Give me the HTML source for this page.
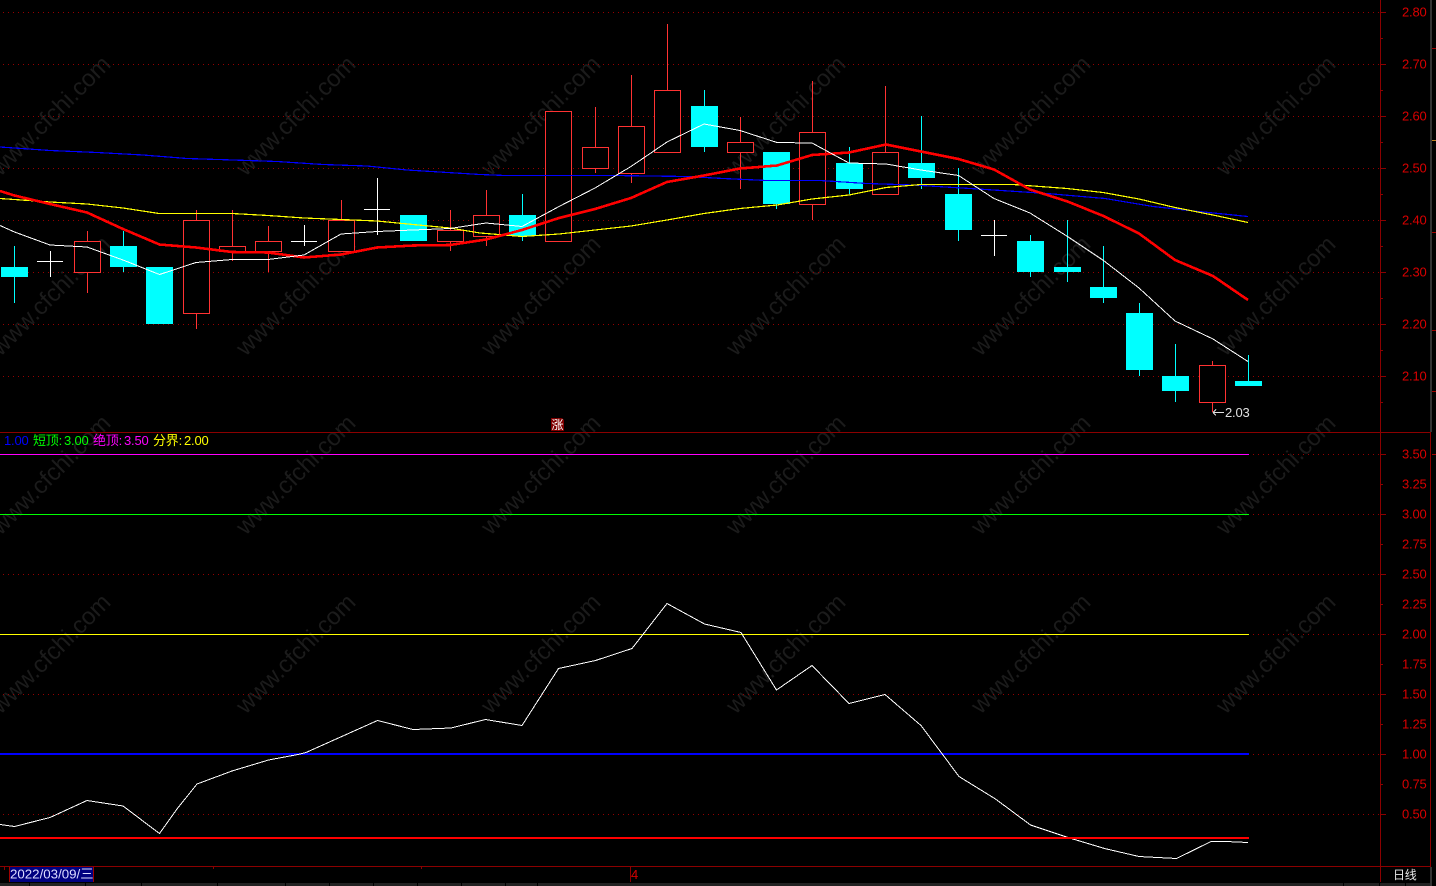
<!DOCTYPE html>
<html>
<head>
<meta charset="utf-8">
<style>
html,body{margin:0;padding:0;background:#000;width:1436px;height:886px;overflow:hidden}
svg{display:block}
text{font-family:"Liberation Sans","Noto Sans CJK SC",sans-serif;font-size:13px;letter-spacing:-.2px}
.ax text{fill:#d80000}
.wm text{font-size:24px;fill:#1b1b1b;text-anchor:middle;dominant-baseline:central;letter-spacing:-.1px}
</style>
</head>
<body>
<svg width="1436" height="886" viewBox="0 0 1436 886" xmlns="http://www.w3.org/2000/svg">
<rect width="1436" height="886" fill="#000"/>
<g class="wm">
<text transform="translate(51,116) rotate(-45)">www.cfchi.com</text>
<text transform="translate(296,116) rotate(-45)">www.cfchi.com</text>
<text transform="translate(541,116) rotate(-45)">www.cfchi.com</text>
<text transform="translate(786,116) rotate(-45)">www.cfchi.com</text>
<text transform="translate(1031,116) rotate(-45)">www.cfchi.com</text>
<text transform="translate(1276,116) rotate(-45)">www.cfchi.com</text>
<text transform="translate(51,296) rotate(-45)">www.cfchi.com</text>
<text transform="translate(296,296) rotate(-45)">www.cfchi.com</text>
<text transform="translate(541,296) rotate(-45)">www.cfchi.com</text>
<text transform="translate(786,296) rotate(-45)">www.cfchi.com</text>
<text transform="translate(1031,296) rotate(-45)">www.cfchi.com</text>
<text transform="translate(1276,296) rotate(-45)">www.cfchi.com</text>
<text transform="translate(51,475) rotate(-45)">www.cfchi.com</text>
<text transform="translate(296,475) rotate(-45)">www.cfchi.com</text>
<text transform="translate(541,475) rotate(-45)">www.cfchi.com</text>
<text transform="translate(786,475) rotate(-45)">www.cfchi.com</text>
<text transform="translate(1031,475) rotate(-45)">www.cfchi.com</text>
<text transform="translate(1276,475) rotate(-45)">www.cfchi.com</text>
<text transform="translate(51,654) rotate(-45)">www.cfchi.com</text>
<text transform="translate(296,654) rotate(-45)">www.cfchi.com</text>
<text transform="translate(541,654) rotate(-45)">www.cfchi.com</text>
<text transform="translate(786,654) rotate(-45)">www.cfchi.com</text>
<text transform="translate(1031,654) rotate(-45)">www.cfchi.com</text>
<text transform="translate(1276,654) rotate(-45)">www.cfchi.com</text>
</g>

<!-- dotted grid -->
<g stroke="#960000" stroke-width="1" stroke-dasharray="1 4" shape-rendering="crispEdges" fill="none">
<path d="M3 12.5H1380M3 64.5H1380M3 116.5H1380M3 168.5H1380M3 220.5H1380M3 272.5H1380M3 324.5H1380M3 376.5H1380"/>
<path d="M3 454.5H1380M3 514.5H1380M3 574.5H1380M3 634.5H1380M3 694.5H1380M3 754.5H1380M3 814.5H1380"/>
</g>

<!-- frame and axis -->
<g stroke="#8b0000" stroke-width="1" shape-rendering="crispEdges" fill="none">
<path d="M1380.5 0V882"/>
<path d="M0 432.5H1431"/>
<path d="M0 866.5H1431"/>
<path d="M1430.5 432V866"/>
<path d="M1380 12.5h6M1380 64.5h6M1380 116.5h6M1380 168.5h6M1380 220.5h6M1380 272.5h6M1380 324.5h6M1380 376.5h6"/>
<path d="M1380 38.5h3M1380 90.5h3M1380 142.5h3M1380 194.5h3M1380 246.5h3M1380 298.5h3M1380 350.5h3M1380 402.5h3"/>
<path d="M1380 454.5h6M1380 514.5h6M1380 574.5h6M1380 634.5h6M1380 694.5h6M1380 754.5h6M1380 814.5h6"/>
<path d="M1380 484.5h3M1380 544.5h3M1380 604.5h3M1380 664.5h3M1380 724.5h3M1380 784.5h3"/>
<path d="M4.5 866v4M213.5 866v3M421.5 866v3M630.5 866v16"/>
</g>

<!-- scrollbar and bottom strip -->
<rect x="1430" y="0" width="2" height="432" fill="#333"/>
<rect x="1430" y="867" width="2" height="19" fill="#333"/>
<rect x="0" y="883" width="1430" height="3" fill="#222"/>
<g fill="#000">
<rect x="29" y="883" width="1" height="3"/><rect x="85" y="883" width="1" height="3"/><rect x="141" y="883" width="1" height="3"/><rect x="217" y="883" width="1" height="3"/><rect x="285" y="883" width="1" height="3"/><rect x="329" y="883" width="1" height="3"/><rect x="373" y="883" width="1" height="3"/><rect x="417" y="883" width="1" height="3"/><rect x="461" y="883" width="1" height="3"/><rect x="505" y="883" width="1" height="3"/><rect x="537" y="883" width="1" height="3"/><rect x="1343" y="883" width="1" height="3"/><rect x="1379" y="883" width="1" height="3"/><rect x="1405" y="883" width="1" height="3"/>
</g>
<rect x="1432" y="48" width="4" height="1" fill="#a00000"/>
<rect x="1432" y="140" width="4" height="1" fill="#c08020"/>
<rect x="1432" y="232" width="4" height="1" fill="#a00000"/>
<rect x="1432" y="330" width="4" height="1" fill="#a00000"/>
<rect x="1432" y="391" width="4" height="1" fill="#a00000"/>
<rect x="1432" y="454" width="4" height="1" fill="#a00000"/>

<!-- candles -->
<g shape-rendering="crispEdges" fill="none">
<!-- wicks cyan -->
<path stroke="#0ff" d="M14.5 246V303M123.5 231V272M522.5 194V241M704.5 90V152M776.5 152V209M849.5 147V194M921.5 116V189M958.5 168V241M1030.5 235V277M1067.5 220V282M1103.5 246V303M1139.5 303V376M1175.5 344V402M1248.5 355V381"/>
<!-- wicks red -->
<path stroke="#ff3232" d="M87.5 231V293M196.5 210V329M232.5 210V261M268.5 226V272M341.5 200V220M450.5 210V251M486.5 190V246M595.5 107V173M631.5 75V183M667.5 24V90M740.5 117V189M812.5 81V220M885.5 86V152M1212.5 361V412"/>
<!-- crosses -->
<path stroke="#fff" d="M50.5 251V277M37 261.5H63M304.5 225V246M291 241.5H317M377.5 178V235M364 209.5H390M994.5 220V256M981 235.5H1007"/>
<!-- red bodies -->
<g stroke="#ff3232" fill="#000">
<rect x="74.5" y="241.5" width="26" height="31"/>
<rect x="183.5" y="220.5" width="26" height="93"/>
<rect x="219.5" y="246.5" width="26" height="5"/>
<rect x="255.5" y="241.5" width="26" height="10"/>
<rect x="328.5" y="220.5" width="26" height="31"/>
<rect x="437.5" y="230.5" width="26" height="11"/>
<rect x="473.5" y="215.5" width="26" height="21"/>
<rect x="545.5" y="111.5" width="26" height="130"/>
<rect x="582.5" y="147.5" width="26" height="21"/>
<rect x="618.5" y="126.5" width="26" height="47"/>
<rect x="654.5" y="90.5" width="26" height="62"/>
<rect x="727.5" y="142.5" width="26" height="10"/>
<rect x="799.5" y="132.5" width="26" height="72"/>
<rect x="872.5" y="152.5" width="26" height="42"/>
<rect x="1199.5" y="365.5" width="26" height="37"/>
</g>
<!-- cyan bodies -->
<g fill="#0ff">
<rect x="1" y="267" width="27" height="10"/>
<rect x="110" y="246" width="27" height="21"/>
<rect x="146" y="267" width="27" height="57"/>
<rect x="400" y="215" width="27" height="26"/>
<rect x="509" y="215" width="27" height="21"/>
<rect x="691" y="106" width="27" height="41"/>
<rect x="763" y="152" width="27" height="52"/>
<rect x="836" y="163" width="27" height="26"/>
<rect x="908" y="163" width="27" height="15"/>
<rect x="945" y="194" width="27" height="36"/>
<rect x="1017" y="241" width="27" height="31"/>
<rect x="1054" y="267" width="27" height="5"/>
<rect x="1090" y="287" width="27" height="11"/>
<rect x="1126" y="313" width="27" height="57"/>
<rect x="1162" y="376" width="27" height="15"/>
<rect x="1235" y="381" width="27" height="5"/>
</g>
</g>

<!-- moving averages -->
<g fill="none" shape-rendering="crispEdges" stroke-linejoin="round">
<polyline stroke="#0000ff" stroke-width="1.2" points="0,147 50,150.5 97,152.5 143,155 187,158.5 233,160 277,161.5 323,164.5 367,166 407,170 480,174.5 505,175.5 613,175.5 687,176.5 723,178.5 767,180.5 820,180.5 867,183.5 913,185 978,189 1047,193.5 1105,198.5 1153,206.5 1194,211 1248,216.5"/>
<polyline stroke="#ffff00" stroke-width="1.2" points="0,198.5 50,202 87,204 123,208 159,213.5 232,213.5 268,215.5 304,218 341,219.5 377,221 413,224.5 450,228 480,233 522,236.5 559,234 595,230 631,226 667,220 704,213.5 740,208.5 777,205 812,199 849,195 886,187.5 921,184.5 958,184.5 1013,184.5 1067,188.5 1103,192.5 1139,199 1175,207.5 1213,215 1248,222.5"/>
<polyline stroke="#ff0000" stroke-width="2.6" points="0,191 14.5,195.5 50,204 87,212.5 123,229 159.5,244.5 196,247.5 232,252 268,252.5 304,257.5 341,254.5 377,247.5 413,245.5 450,245 486,239.5 522,230 559,218 595,209 631,198 667,182 704,175.5 740,168.5 777,165.5 812,155 849,152.5 886,144.5 921,151.5 958.5,159 994,169.5 1030,189.5 1067.5,201.5 1103.5,216 1139,233.5 1175,260 1213,276 1248,300"/>
<polyline stroke="#ffffff" stroke-width="1" points="0,225.5 14.5,232 50,245 87,247 123,260 159.5,274.5 196,262.5 232,259.5 268,259.5 304,255 341,234 377,231.5 413,230 450,228.5 486,223 522,226.5 559,206.5 595,188 631,166.5 667,142 704,124 740,130.5 777,142.5 812,143 849,163 886,164 921,170 958.5,175.5 994,198.5 1030,213 1067.5,236.5 1103.5,260.5 1139,288 1175,321 1213,339 1248,361.5"/>
</g>

<!-- lower pane -->
<g fill="none" shape-rendering="crispEdges">
<path stroke="#ff00ff" d="M0 454.5H1249"/>
<path stroke="#00ff00" d="M0 514.5H1249"/>
<path stroke="#ffff00" d="M0 634.5H1249"/>
<path stroke="#0000ff" stroke-width="2" d="M0 754H1249"/>
<polyline stroke="#ffffff" points="0,824.5 14.5,826.5 50,817.5 87,800.5 123,806 159.5,833.5 177,809 197,784 232,771 268.5,760 298,754.5 306,752.5 377.5,720.5 413,729.5 451,728 485.5,719.5 522,725.5 558.5,668.5 595.5,660.5 632,648.5 667,603.5 704.5,624 741,632.5 776.5,690 812,665.5 849,703.5 885,694.5 921,725.5 959,776.5 995.5,799 1030.5,825 1068,837.5 1104.5,848.5 1139,856.5 1176.5,858.5 1211,841.5 1226,841.5 1248,842.5"/>
<path stroke="#ff0000" stroke-width="2" d="M0 838H1249"/>
</g>

<!-- axis labels -->
<g class="ax">
<text x="1402" y="16.5">2.80</text>
<text x="1402" y="68.5">2.70</text>
<text x="1402" y="120.5">2.60</text>
<text x="1402" y="172.5">2.50</text>
<text x="1402" y="224.5">2.40</text>
<text x="1402" y="276.5">2.30</text>
<text x="1402" y="328.5">2.20</text>
<text x="1402" y="380.5">2.10</text>
<text x="1402" y="458.5">3.50</text>
<text x="1402" y="488.5">3.25</text>
<text x="1402" y="518.5">3.00</text>
<text x="1402" y="548.5">2.75</text>
<text x="1402" y="578.5">2.50</text>
<text x="1402" y="608.5">2.25</text>
<text x="1402" y="638.5">2.00</text>
<text x="1402" y="668.5">1.75</text>
<text x="1402" y="698.5">1.50</text>
<text x="1402" y="728.5">1.25</text>
<text x="1402" y="758.5">1.00</text>
<text x="1402" y="788.5">0.75</text>
<text x="1402" y="818.5">0.50</text>
<text x="631" y="879" style="fill:#d80000">4</text>
</g>

<!-- legend -->
<text y="445" x="4" fill="#0000ff">1.00</text>
<text y="445" x="33" fill="#00ff00">短顶:</text>
<text y="445" x="64" fill="#00ff00">3.00</text>
<text y="445" x="93" fill="#ff00ff">绝顶:</text>
<text y="445" x="124" fill="#ff00ff">3.50</text>
<text y="445" x="153" fill="#ffff00">分界:</text>
<text y="445" x="184" fill="#ffff00">2.00</text>

<!-- low price marker -->
<path d="M1213 412.5H1224M1213 412.5l3-3M1213 412.5l3 3" stroke="#e0e0e0" fill="none" shape-rendering="crispEdges"/>
<text x="1225" y="417" fill="#e0e0e0">2.03</text>

<!-- rise badge -->
<path d="M551 418H562L564 420V431H551Z" fill="#800000"/>
<text x="551.5" y="429" fill="#fff" style="font-size:12px">涨</text>

<!-- date -->
<rect x="9.5" y="867" width="84" height="15" fill="#000080"/>
<path d="M9.5 867V882M93.5 867V882" stroke="#a00000" shape-rendering="crispEdges"/>
<text x="10" y="878.5" fill="#dcdcff" style="font-size:13.3px;letter-spacing:0">2022/03/09/三</text>

<text x="1393" y="879" fill="#e6e6e6" style="font-size:12px">日线</text>
</svg>
</body>
</html>
